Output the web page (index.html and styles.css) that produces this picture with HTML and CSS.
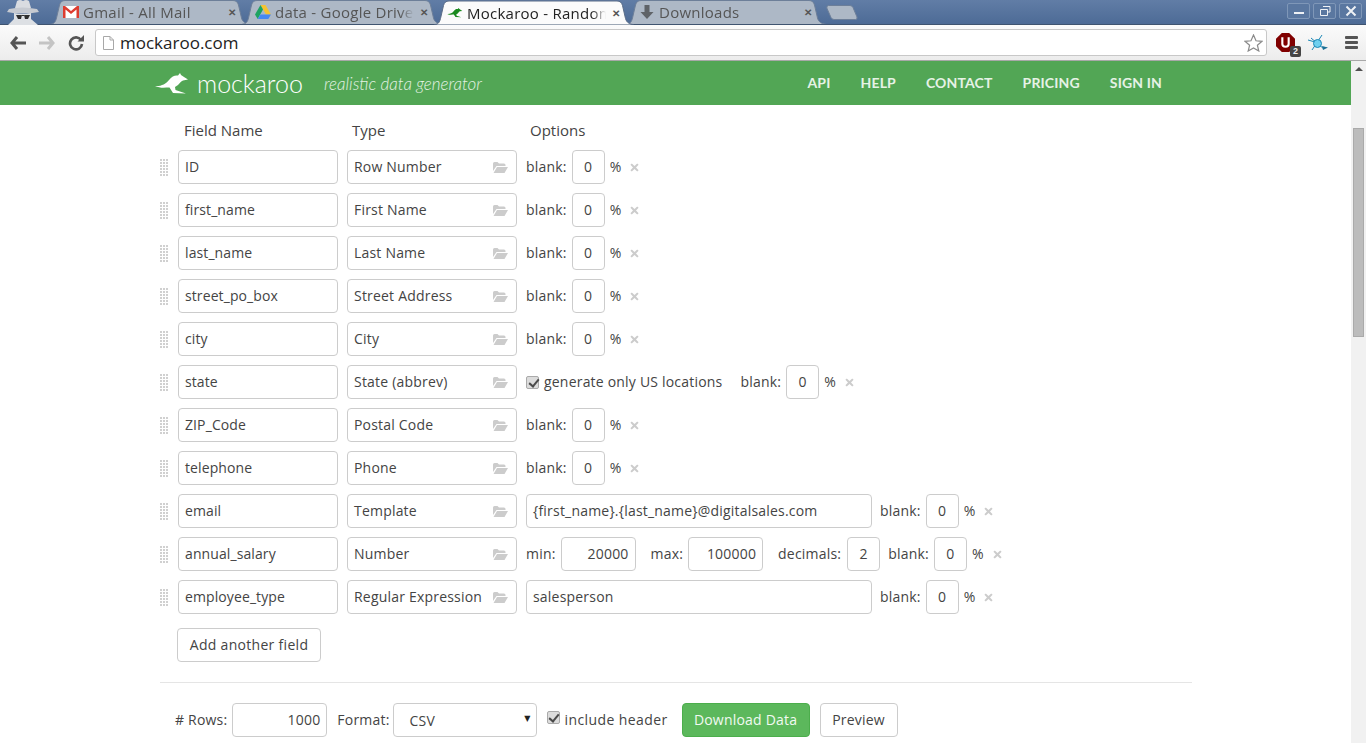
FILE: index.html
```html
<!DOCTYPE html>
<html lang="en">
<head>
  <meta charset="UTF-8">
  <title>Mockaroo - Random Data Generator</title>
  <link rel="stylesheet" href="styles.css">
</head>
<body>
  <svg class="defs" width="0" height="0">
    <symbol id="folder" viewBox="0 0 15 11">
      <path d="M0 1.5 Q0 0 1.5 0 H4.5 L6 1.5 H11 Q12.5 1.5 12.5 3 V4 H3.5 L0 9 Z M4 5 H15 L11.5 11 H0.5 Z"/>
    </symbol>
    <symbol id="times" viewBox="0 0 9 9">
      <path d="M1.8 0.4 L4.5 3 L7.2 0.4 L8.6 1.8 L6 4.5 L8.6 7.2 L7.2 8.6 L4.5 6 L1.8 8.6 L0.4 7.2 L3 4.5 L0.4 1.8 Z"/>
    </symbol>
    <symbol id="roo" viewBox="0 0 34 24">
      <path d="M0 15 C6 15.5 11 13 14 9 C17 5 20 4 23 4.500 L25 2 L26 4 L29 6 L33 8.500 L28 9.500 C26 10 25 12 23 14 L20 16 L20.500 19 L31 22.500 L18 22 L14.500 16.500 C10 16.500 5 17.500 0 15 Z"/>
    </symbol>
    <symbol id="tabshape" viewBox="0 0 200 24">
      <path d="M0.500 24 C4 24 5.500 22 6.500 18 L9.500 5 C10.300 2 12 0.500 15 0.500 H183 C186 0.500 187.700 2 188.500 5 L191.500 18 C192.500 22 196 24 199.500 24"/>
    </symbol>
  </svg>

  <div class="tabstrip">
    <svg class="incognito" width="36" height="25" viewBox="0 0 36 25">
      <path d="M11 8 L13 1 Q16 -1 19 1 Q22 -1 25 1 L27 8 Z" fill="#d9dce1"/>
      <path d="M5 9 Q18 6 33 9 L35 12 Q18 15 3 12 Z" fill="#c6cad1"/>
      <path d="M10 13 Q18 15 27 13 V19 L34 25 H4 L10 19 Z" fill="#dde0e4"/>
      <path d="M12 15 H18 L17 19 H14 Z M20 15 H26 L24 19 H21 Z M18 15 H20 V16 H18 Z" fill="#2e2e2e"/>
    </svg>
    <div class="tab">
      <svg class="tab-shape"><use href="#tabshape"/></svg>
      <svg class="fav" width="16" height="12" viewBox="0 0 16 12"><path d="M0 0 H16 V12 H0 Z" fill="#fff"/><path d="M0 0 L2 0 L8 5 L14 0 H16 V12 H13.500 V3.500 L8 8 L2.500 3.500 V12 H0 Z" fill="#dd3c30"/></svg>
      <span class="tab-title">Gmail - All Mail</span>
      <span class="tab-close">✕</span>
    </div>
    <div class="tab">
      <svg class="tab-shape"><use href="#tabshape"/></svg>
      <svg class="fav" width="16" height="15" viewBox="0 0 16 15"><path d="M5.500 0 H10.500 L16 9.500 H11 Z" fill="#f5c330"/><path d="M5.500 0 L8 4.500 L2.700 14 L0 9.500 Z" fill="#1ea362"/><path d="M2.700 14 L5.400 9.500 H16 L13.300 14 Z" fill="#4688f1"/></svg>
      <span class="tab-title">data - Google Drive</span>
      <span class="tab-close">✕</span>
    </div>
    <div class="tab tab-active">
      <svg class="tab-shape"><use href="#tabshape"/></svg>
      <svg class="fav" width="16" height="11" viewBox="0 0 34 24"><use href="#roo" fill="#1a8a1e"/></svg>
      <span class="tab-title">Mockaroo - Random</span>
      <span class="tab-close">✕</span>
    </div>
    <div class="tab">
      <svg class="tab-shape"><use href="#tabshape"/></svg>
      <svg class="fav" width="16" height="14" viewBox="-1.500 0 16 14"><path d="M4 0 H9 V7 H13 L6.500 14 L0 7 H4 Z" fill="#5f6368"/></svg>
      <span class="tab-title">Downloads</span>
      <span class="tab-close">✕</span>
    </div>
    <svg class="newtab" width="32" height="15" viewBox="0 0 32 15"><path d="M2.500 0.500 H24 Q26 0.500 27 2.500 L31 12 Q31.500 14.500 29.500 14.500 H8 Q6 14.500 5 12.500 L0.800 3 Q0.500 0.500 2.500 0.500 Z" fill="#adb8c6" stroke="#6d7f99"/></svg>
    <div class="winctl">
      <div class="winbtn"><svg width="12" height="12" viewBox="0 0 12 12"><path d="M1 7 H11 V9 H1 Z" fill="#eef1f5"/></svg></div>
      <div class="winbtn"><svg width="12" height="12" viewBox="0 0 12 12"><path d="M4 1.500 H11 V7 H8.500 M1.500 4.500 H8.500 V10.500 H1.500 Z" fill="none" stroke="#eef1f5"/></svg></div>
      <div class="winbtn"><svg width="12" height="12" viewBox="0 0 12 12"><path d="M1.500 1.500 L10.500 10.500 M10.500 1.500 L1.500 10.500" stroke="#eef1f5" stroke-width="2"/></svg></div>
    </div>
  </div>

  <div class="toolbar">
    <svg class="navicon" width="16" height="14" viewBox="0 0 16 14"><path d="M7 1 L2 7 L7 13 M2.500 7 H16" fill="none" stroke="#555" stroke-width="3"/></svg>
    <svg class="navicon" width="16" height="14" viewBox="0 0 16 14"><path d="M9 1 L14 7 L9 13 M13.500 7 H0" fill="none" stroke="#c4c4c4" stroke-width="3"/></svg>
    <svg class="navicon" width="16" height="16" viewBox="0 0 16 16"><path d="M13 5 A6 6 0 1 0 14 9" fill="none" stroke="#555" stroke-width="2.600"/><path d="M9.500 6.500 H16 V0 Z" fill="#555"/></svg>
    <div class="omnibox">
      <svg width="11" height="14" viewBox="0 0 11 14"><path d="M0.500 0.500 H7 L10.500 4 V13.500 H0.500 Z M7 0.500 V4 H10.500" fill="#fff" stroke="#a8a8a8"/></svg>
      <span class="url">mockaroo.com</span>
      <svg class="star" width="19" height="18" viewBox="0 0 19 18"><path d="M9.500 1 L12 6.800 L18 7.300 L13.400 11.200 L14.800 17 L9.500 14 L4.200 17 L5.600 11.200 L1 7.300 L7 6.800 Z" fill="#fff" stroke="#8a8a8a" stroke-width="1.200"/></svg>
    </div>
    <div class="ublock">
      <svg width="19" height="19" viewBox="0 0 18 18"><path d="M5.500 0 H12.500 L18 5.500 V12.500 L12.500 18 H5.500 L0 12.500 V5.500 Z" fill="#800000"/><path d="M6 4 V10.500 Q6 13 9 13 Q12 13 12 10.500 V4" fill="none" stroke="#fff" stroke-width="2"/></svg>
      <span class="badge">2</span>
    </div>
    <svg class="ext" width="20" height="18" viewBox="0 0 20 18"><path d="M3 4 L16 15 M14 1 L4 16 M0 6 L7 8" stroke="#1b87b5" stroke-width="1" fill="none"/><circle cx="9.500" cy="9.500" r="4" fill="#6fd0ef" stroke="#1b87b5"/><path d="M14 12 L20 13.500 L15 16 Z" fill="#1b6f95"/></svg>
    <div class="menu"><i></i><i></i><i></i></div>
  </div>

  <div class="viewport">
    <div class="page">
      <header class="site-header">
        <div class="brand">
          <svg class="roo" width="34" height="24" viewBox="0 0 34 24"><use href="#roo" fill="#fff"/></svg>
          <span class="wordmark">mockaroo</span>
          <span class="tagline">realistic data generator</span>
        </div>
        <nav class="site-nav">
          <a>API</a>
          <a>HELP</a>
          <a>CONTACT</a>
          <a>PRICING</a>
          <a>SIGN IN</a>
        </nav>
      </header>

      <main class="schema">
        <div class="col-heads">
          <span class="head-name">Field Name</span>
          <span class="head-type">Type</span>
          <span>Options</span>
        </div>

        <div class="row">
          <span class="handle"></span>
          <div class="input name">ID</div>
          <div class="input type">Row Number<svg><use href="#folder"/></svg></div>
          <div class="opts"><span>blank:</span><div class="input pct">0</div><span>%</span><svg class="del"><use href="#times"/></svg></div>
        </div>
        <div class="row">
          <span class="handle"></span>
          <div class="input name">first_name</div>
          <div class="input type">First Name<svg><use href="#folder"/></svg></div>
          <div class="opts"><span>blank:</span><div class="input pct">0</div><span>%</span><svg class="del"><use href="#times"/></svg></div>
        </div>
        <div class="row">
          <span class="handle"></span>
          <div class="input name">last_name</div>
          <div class="input type">Last Name<svg><use href="#folder"/></svg></div>
          <div class="opts"><span>blank:</span><div class="input pct">0</div><span>%</span><svg class="del"><use href="#times"/></svg></div>
        </div>
        <div class="row">
          <span class="handle"></span>
          <div class="input name">street_po_box</div>
          <div class="input type">Street Address<svg><use href="#folder"/></svg></div>
          <div class="opts"><span>blank:</span><div class="input pct">0</div><span>%</span><svg class="del"><use href="#times"/></svg></div>
        </div>
        <div class="row">
          <span class="handle"></span>
          <div class="input name">city</div>
          <div class="input type">City<svg><use href="#folder"/></svg></div>
          <div class="opts"><span>blank:</span><div class="input pct">0</div><span>%</span><svg class="del"><use href="#times"/></svg></div>
        </div>
        <div class="row">
          <span class="handle"></span>
          <div class="input name">state</div>
          <div class="input type">State (abbrev)<svg><use href="#folder"/></svg></div>
          <div class="opts">
            <span class="check checked"></span><span class="gap-long">generate only US locations</span>
            <span>blank:</span><div class="input pct">0</div><span>%</span><svg class="del"><use href="#times"/></svg>
          </div>
        </div>
        <div class="row">
          <span class="handle"></span>
          <div class="input name">ZIP_Code</div>
          <div class="input type">Postal Code<svg><use href="#folder"/></svg></div>
          <div class="opts"><span>blank:</span><div class="input pct">0</div><span>%</span><svg class="del"><use href="#times"/></svg></div>
        </div>
        <div class="row">
          <span class="handle"></span>
          <div class="input name">telephone</div>
          <div class="input type">Phone<svg><use href="#folder"/></svg></div>
          <div class="opts"><span>blank:</span><div class="input pct">0</div><span>%</span><svg class="del"><use href="#times"/></svg></div>
        </div>
        <div class="row">
          <span class="handle"></span>
          <div class="input name">email</div>
          <div class="input type">Template<svg><use href="#folder"/></svg></div>
          <div class="opts">
            <div class="input wide">{first_name}.{last_name}@digitalsales.com</div>
            <span>blank:</span><div class="input pct">0</div><span>%</span><svg class="del"><use href="#times"/></svg>
          </div>
        </div>
        <div class="row">
          <span class="handle"></span>
          <div class="input name">annual_salary</div>
          <div class="input type">Number<svg><use href="#folder"/></svg></div>
          <div class="opts">
            <span>min:</span><div class="input num">20000</div>
            <span class="gap-left">max:</span><div class="input num">100000</div>
            <span class="gap-left gap-dec">decimals:</span><div class="input pct">2</div>
            <span class="gap-small">blank:</span><div class="input pct">0</div><span>%</span><svg class="del"><use href="#times"/></svg>
          </div>
        </div>
        <div class="row">
          <span class="handle"></span>
          <div class="input name">employee_type</div>
          <div class="input type">Regular Expression<svg><use href="#folder"/></svg></div>
          <div class="opts">
            <div class="input wide">salesperson</div>
            <span>blank:</span><div class="input pct">0</div><span>%</span><svg class="del"><use href="#times"/></svg>
          </div>
        </div>

        <div class="btn add-field">Add another field</div>
        <hr class="divider">

        <div class="export">
          <span class="label">#&nbsp;Rows:</span>
          <div class="input rows">1000</div>
          <span class="label format-label">Format:</span>
          <div class="input format">CSV<span class="caret">▼</span></div>
          <span class="check checked"></span>
          <span class="label include">include header</span>
          <div class="btn btn-green">Download Data</div>
          <div class="btn btn-preview">Preview</div>
        </div>
      </main>
    </div>
    <div class="scrollbar">
      <span class="arrow"></span>
      <span class="thumb"></span>
    </div>
  </div>
</body>
</html>
```

FILE: styles.css
```css
* {
  box-sizing: border-box;
}
html, body {
  height: 100%;
}
body {
  margin: 0;
  overflow: hidden;
  font-family: "Open Sans", sans-serif;
  font-size: 14px;
  color: #444;
  background: #fff;
}
.defs {
  position: absolute;
}

/* browser chrome */
.tabstrip {
  display: flex;
  align-items: flex-end;
  height: 25px;
  padding-left: 4px;
  background: linear-gradient(#617da6, #4d6b96);
  border-bottom: 1px solid #3f5470;
}
.incognito {
  flex: none;
  margin: 0 10px -1px 0;
}
.tab {
  position: relative;
  display: flex;
  align-items: center;
  flex: none;
  width: 200px;
  height: 24px;
  margin-right: -8px;
  padding: 0 12px 0 13px;
  color: #555;
  font-size: 15px;
  letter-spacing: 0.25px;
}
.tab-shape {
  position: absolute;
  top: 0;
  left: 0;
  width: 200px;
  height: 24px;
  fill: #adb8c6;
  stroke: #6d7f99;
}
.fav {
  position: relative;
  flex: none;
  margin-right: 4px;
}
.tab-title {
  position: relative;
  flex: 1;
  min-width: 0;
  margin-right: 4px;
  overflow: hidden;
  white-space: nowrap;
  -webkit-mask-image: linear-gradient(to left, transparent, #000 14px);
  mask-image: linear-gradient(to left, transparent, #000 14px);
}
.tab-close {
  position: relative;
  flex: none;
  width: 12px;
  font-size: 10px;
  font-weight: bold;
  text-align: center;
  color: #555;
}
.tab-active {
  z-index: 1;
  height: 25px;
  margin-bottom: -1px;
  color: #222;
}
.tab-active .tab-shape {
  height: 25px;
  fill: #fbfbfb;
  stroke: #5a6c88;
}
.newtab {
  flex: none;
  margin: 0 0 4px 8px;
}
.winctl {
  display: flex;
  gap: 3px;
  align-self: flex-start;
  margin-left: auto;
  padding: 3px 4px 0 0;
}
.winbtn {
  display: flex;
  align-items: center;
  justify-content: center;
  width: 23px;
  height: 16px;
  background: #5a77a0;
  border: 1px solid #7f97b8;
  border-radius: 2px;
}

.toolbar {
  display: flex;
  align-items: center;
  height: 36px;
  padding: 0 8px 0 10px;
  background: linear-gradient(#fbfbfb, #ececec);
  border-bottom: 1px solid #a8a8a8;
}
.navicon {
  flex: none;
  margin-right: 13px;
}
.omnibox {
  display: flex;
  align-items: center;
  flex: 1;
  height: 27px;
  margin-left: -2px;
  padding: 0 3px 0 7px;
  background: #fff;
  border: 1px solid #c8c8c8;
  border-radius: 3px;
}
.url {
  flex: 1;
  margin-left: 6px;
  font-size: 17px;
  color: #222;
}
.ublock {
  position: relative;
  flex: none;
  width: 19px;
  height: 19px;
  margin: 0 13px 0 9px;
}
.badge {
  position: absolute;
  right: -6px;
  bottom: -5px;
  width: 11px;
  height: 11px;
  font: bold 9px/11px "Liberation Sans", sans-serif;
  text-align: center;
  color: #eee;
  background: #444;
  border-radius: 2px;
}
.ext {
  flex: none;
}
.menu {
  display: flex;
  flex-direction: column;
  gap: 2px;
  flex: none;
  margin-left: 17px;
}
.menu i {
  display: block;
  width: 13px;
  height: 3px;
  background: #555;
  border-radius: 1px;
}

/* page */
.viewport {
  display: flex;
  height: calc(100% - 61px);
}
.page {
  flex: 1;
  min-width: 0;
}
.scrollbar {
  position: relative;
  flex: none;
  width: 15px;
  background: #f1f1f1;
}
.arrow {
  position: absolute;
  top: 6px;
  left: 4px;
  border: 4px solid transparent;
  border-top: 0;
  border-bottom: 4px solid #505050;
}
.thumb {
  position: absolute;
  top: 67px;
  left: 2px;
  width: 11px;
  height: 209px;
  background: #bcbcbc;
  border: 1px solid #aaa;
}
.site-header {
  display: flex;
  align-items: center;
  justify-content: space-between;
  height: 44px;
  padding: 0 189px 0 155px;
  color: #fff;
  background: #52a655;
}
.brand {
  display: flex;
  align-items: center;
}
.roo {
  margin-right: 8px;
}
.wordmark {
  font-family: Lato, sans-serif;
  font-size: 25px;
  font-weight: 300;
  line-height: 1;
}
.tagline {
  margin-left: 21px;
  font-family: Lato, sans-serif;
  font-size: 17px;
  font-weight: 300;
  font-style: italic;
  color: #e4f2e4;
}
.site-nav {
  display: flex;
  gap: 30px;
  margin-bottom: 2px;
}
.site-nav a {
  font-family: Lato, sans-serif;
  font-size: 14px;
  font-weight: 700;
  letter-spacing: 0.15px;
  color: #e6f2e6;
}

.schema {
  padding: 15px 0 0 160px;
  letter-spacing: 0.2px;
}
.col-heads {
  display: flex;
  height: 30px;
  padding-left: 24px;
  font-size: 15px;
  line-height: 20px;
  letter-spacing: 0;
}
.head-name {
  width: 168px;
}
.head-type {
  width: 178px;
}
.row {
  display: flex;
  align-items: center;
  gap: 9px;
  height: 34px;
  margin-bottom: 9px;
}
.handle {
  flex: none;
  width: 8px;
  height: 17px;
  margin-right: 1px;
  background:
    linear-gradient(to right, transparent 2px, #fff 2px) 0 0 / 3px 3px,
    linear-gradient(to bottom, transparent 2px, #fff 2px) 0 0 / 3px 3px,
    #d0d0d0;
}
.input {
  display: flex;
  align-items: center;
  flex: none;
  height: 34px;
  padding: 0 6px 2px;
  color: #444;
  background: #fff;
  border: 1px solid #ccc;
  border-radius: 4px;
}
.name {
  width: 160px;
  letter-spacing: 0.1px;
}
.type {
  justify-content: space-between;
  width: 170px;
}
.type svg {
  width: 15px;
  height: 11px;
  margin: 2px 2px 0 0;
  fill: #ccc;
}
.opts {
  display: flex;
  align-items: center;
  gap: 5px;
}
.opts > span:not(.check),
.label {
  margin-bottom: 2px;
}
.pct {
  justify-content: center;
  width: 33px;
}
.num {
  justify-content: flex-end;
  width: 75px;
}
.wide {
  width: 346px;
  margin-right: 3px;
}
.del {
  width: 9px;
  height: 9px;
  margin-left: 4px;
  fill: #ccc;
}
.opts > .gap-long {
  margin-right: 13px;
}
.opts > .gap-left {
  margin-left: 10px;
}
.opts > .gap-dec {
  margin-right: 1px;
}
.opts > .gap-small {
  margin-left: 3px;
}
.check {
  flex: none;
  width: 13px;
  height: 13px;
  background: #dcdcdc;
  border: 1px solid #aaa;
  border-radius: 2px;
}
.checked {
  position: relative;
}
.checked::after {
  content: "";
  position: absolute;
  left: 3.5px;
  top: 0;
  width: 4px;
  height: 8px;
  border: solid #4a4a4a;
  border-width: 0 2px 2px 0;
  transform: rotate(40deg);
}
.btn {
  display: inline-flex;
  align-items: center;
  justify-content: center;
  flex: none;
  height: 34px;
  padding-bottom: 2px;
  color: #444;
  background: #fff;
  border: 1px solid #ccc;
  border-radius: 4px;
}
.add-field {
  width: 144px;
  margin: 5px 0 0 17px;
  letter-spacing: 0.3px;
}
.divider {
  width: 1032px;
  height: 1px;
  margin: 20px 0;
  background: #e5e5e5;
  border: 0;
}
.export {
  display: flex;
  align-items: center;
  height: 34px;
  padding-left: 15px;
}
.rows {
  justify-content: flex-end;
  width: 95px;
  margin-left: 5px;
}
.format-label {
  margin: 0 3px 2px 10px;
}
.format {
  position: relative;
  width: 144px;
  padding: 0 0 0 16px;
  margin-right: 10px;
}
.caret {
  position: absolute;
  top: 10px;
  right: 5px;
  font: 8px/10px "DejaVu Sans", sans-serif;
  color: #222;
}
.export .check {
  margin-bottom: 6px;
}
.include {
  margin: 0 14px 2px 5px;
  letter-spacing: 0.4px;
}
.btn-green {
  width: 128px;
  margin-right: 10px;
  color: #f2faf2;
  background: #5cb85c;
  border-color: #4cae4c;
}
.btn-preview {
  width: 78px;
}
```
